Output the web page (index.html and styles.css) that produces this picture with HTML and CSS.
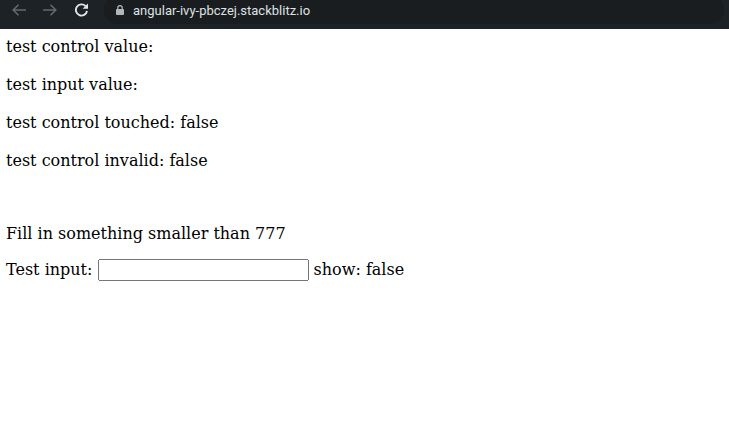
FILE: index.html
```html
<!DOCTYPE html>
<html lang="en">
<head>
<meta charset="utf-8">
<title>angular-ivy-pbczej</title>
<link rel="stylesheet" href="styles.css">
</head>
<body>
<header class="toolbar">
  <nav class="nav-icons">
    <svg class="icon" width="14" height="12" viewBox="0 0 14 12"><path d="M14 6H1.5M6.5 .8L1.2 6l5.3 5.2" class="stroke-dim"/></svg>
    <svg class="icon" width="14" height="12" viewBox="0 0 14 12"><path d="M0 6h12.5M7.5 .8L12.8 6l-5.3 5.2" class="stroke-dim"/></svg>
    <svg class="icon reload" width="15" height="14" viewBox="0 0 15 14"><path d="M11.6 3.2A5.6 5.6 0 1 0 13 8" class="stroke-bright"/><path d="M14 .4v5.4H8.6z" class="fill-bright"/></svg>
  </nav>
  <div class="omnibox">
    <svg class="lock" width="8" height="10" viewBox="0 0 8 10"><path d="M1.8 5V2.8a2.2 2.2 0 0 1 4.4 0V5" class="lock-shackle"/><rect x="0" y="4" width="8" height="6" rx="1" class="lock-body"/></svg>
    <span class="url">angular-ivy-pbczej.stackblitz.io</span>
  </div>
</header>
<main class="page">
  <section class="status">
    <p>test control value:</p>
    <p>test input value:</p>
    <p>test control touched: false</p>
    <p>test control invalid: false</p>
  </section>
  <p class="hint">Fill in something smaller than 777</p>
  <p class="field">Test input: <input class="text-input" type="text"> show: false</p>
</main>
</body>
</html>
```
FILE: styles.css
```css
html, body { margin: 0; padding: 0; background: #fff; }
body { font-family: "DejaVu Serif", serif; font-size: 16px; color: #000; }
.toolbar { display: flex; align-items: flex-start; height: 29px; overflow: hidden; background: #1d2226; padding: 0 5px 0 12px; box-sizing: border-box; }
.nav-icons { display: flex; gap: 17px; align-items: center; height: 20px; }
.icon { display: block; }
.stroke-dim { fill: none; stroke: #65696c; stroke-width: 1.6; }
.stroke-bright { fill: none; stroke: #e3e5e6; stroke-width: 1.9; }
.fill-bright { fill: #e3e5e6; }
.omnibox { flex: 1; height: 28px; margin: -4px 0 0 15px; padding-left: 12px; background: #191d20; border-radius: 14px; display: flex; align-items: center; gap: 9px; }
.lock-shackle { fill: none; stroke: #b4b7b9; stroke-width: 1.2; }
.lock-body { fill: #b4b7b9; }
.url { font-family: Roboto, sans-serif; font-size: 13px; color: #dfe1e2; }
.page { padding: 8px 6px 0; }
.page p { margin: 0; }
.status { margin-bottom: 54px; display: flex; flex-direction: column; gap: 19px; }
.page .hint { margin-bottom: 16px; }
.text-input { box-sizing: border-box; width: 211px; height: 22px; vertical-align: middle; }
```
